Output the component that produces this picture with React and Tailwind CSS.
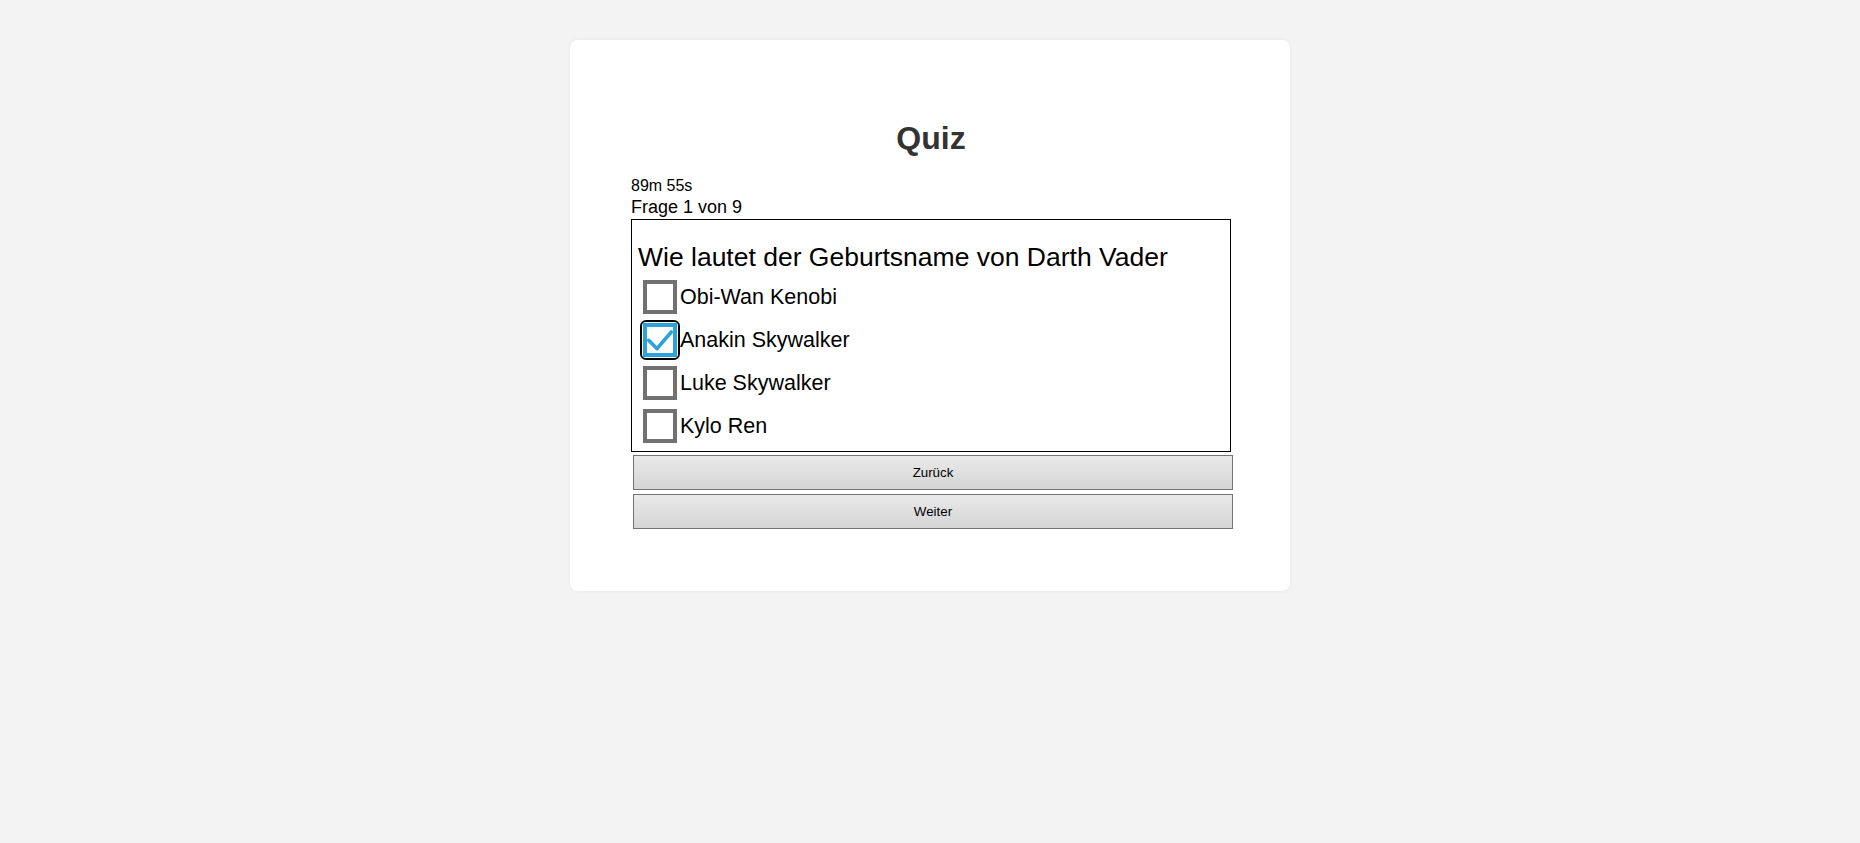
import React from "react";

const options = [
  { label: "Obi-Wan Kenobi", checked: false },
  { label: "Anakin Skywalker", checked: true },
  { label: "Luke Skywalker", checked: false },
  { label: "Kylo Ren", checked: false },
];

function Box({ checked }) {
  if (checked) {
    return (
      <div className="ml-[5px] w-[34px] h-[34px] shrink-0 rounded-[3px] outline-2 outline-black outline-offset-[1px]">
        <div className="w-[34px] h-[34px] border-[4px] border-[#2aa3dd] bg-white">
          <svg width="34" height="34" viewBox="0 0 34 34" className="-mt-[4px] -ml-[4px] block">
            <path d="M5.7 17.3 L14 25.7 L28.3 9" fill="none" stroke="#2aa3dd" strokeWidth="3.6" strokeLinecap="round" strokeLinejoin="round" />
          </svg>
        </div>
      </div>
    );
  }
  return <div className="ml-[5px] w-[34px] h-[34px] shrink-0 border-[4px] border-[#717171] bg-white" />;
}

export default function App() {
  return (
    <div className="min-h-[843px] w-full bg-[#f3f3f3] pt-[40px] font-['Liberation_Sans',Arial,sans-serif]">
      <div className="mx-auto w-[720px] h-[551px] rounded-[8px] bg-white shadow-[0_0_4px_rgba(0,0,0,0.06)] pt-[80px] pl-[61px] pr-[59px]">
        <h1 className="text-center text-[32px] leading-[37px] font-bold text-[#333333] mb-[19px]">Quiz</h1>
        <div className="text-[16px] leading-[20px] text-black">89m 55s</div>
        <div className="text-[18px] leading-[23px] text-black">Frage 1 von 9</div>
        <div className="w-[600px] border border-black pl-[6px] pb-[4px]">
          <div className="mt-[22px] text-[26.5px] leading-[30px] text-black whitespace-nowrap">
            Wie lautet der Geburtsname von Darth Vader
          </div>
          <div className="mt-[3px] flex flex-col">
            {options.map((o) => (
              <div key={o.label} className="h-[43px] flex items-center">
                <Box checked={o.checked} />
                <span className="ml-[3px] text-[21.5px] leading-[24px] text-black">{o.label}</span>
              </div>
            ))}
          </div>
        </div>
        <div className="mt-[3px] ml-[2px] flex flex-col gap-[4px]">
          {["Zurück", "Weiter"].map((b) => (
            <button
              key={b}
              className="w-[600px] h-[35px] border border-[#737373] bg-gradient-to-b from-[#e9e9e9] to-[#d5d5d5] text-[13.33px] text-black"
            >
              {b}
            </button>
          ))}
        </div>
      </div>
    </div>
  );
}
